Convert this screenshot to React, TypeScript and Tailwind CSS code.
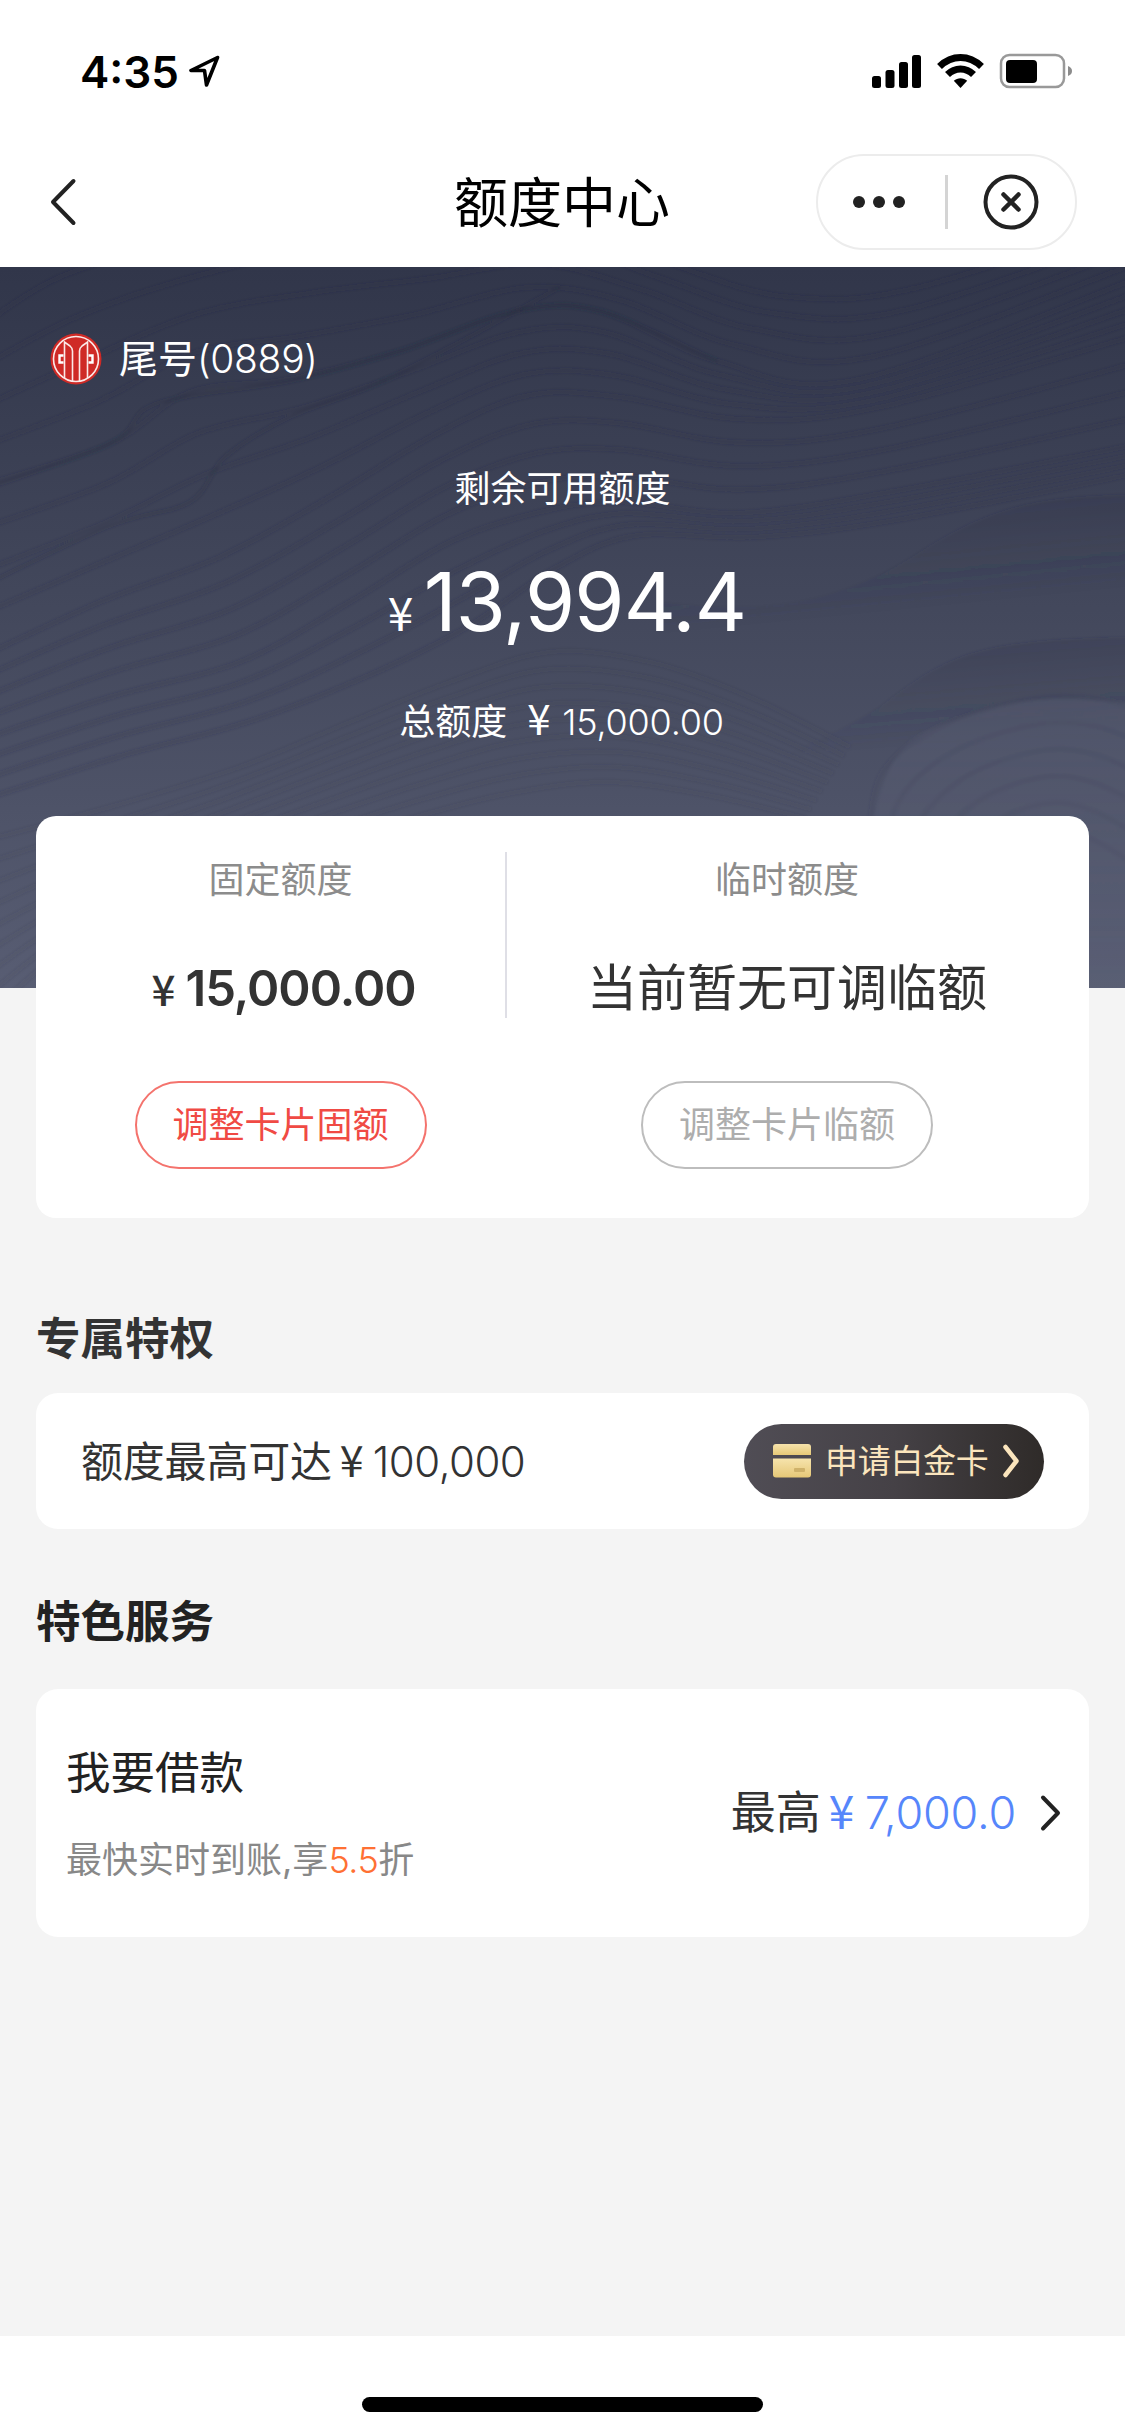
import type { ReactNode } from "react";

type Point = [number, number];

// contour lines of the hero background, from the top one to the bottom one
const contours: Point[][] = [
  [[-40, 75], [60, 10], [200, -30], [330, -60], [450, -60], [560, -50], [680, 0], [790, 30], [920, 20], [1165, -60]],
  [[-40, 225], [107, 178], [190, 125], [290, 112], [400, 84], [516, 44], [600, 44], [717, 94], [860, 112], [1165, 0]],
  [[-40, 400], [100, 335], [220, 290], [330, 230], [440, 165], [530, 128], [620, 130], [740, 152], [880, 140], [1165, 60]],
  [[-40, 480], [110, 430], [240, 395], [350, 335], [450, 275], [540, 245], [620, 235], [740, 246], [890, 225], [1165, 172]],
  [[-40, 560], [120, 510], [250, 475], [370, 435], [470, 390], [560, 320], [640, 280], [760, 278], [900, 262], [1165, 210]],
];

const lower: Point[][] = [
  [[-40, 580], [110, 540], [240, 500], [350, 455], [450, 415], [550, 385], [650, 395], [750, 430], [850, 480]],
  [[-40, 800], [60, 700], [180, 640], [300, 600], [400, 570], [500, 545], [600, 530], [700, 540], [800, 560]],
];

const hill: Point[][] = [
  [[868, 600], [880, 510], [940, 460], [1030, 432], [1100, 432], [1165, 455]],
  [[960, 790], [975, 690], [1000, 620], [1045, 590], [1090, 600], [1165, 650]],
];

// the few lines that stand out from the rest
const accents: Point[][] = [
  [[-40, 230], [107, 178], [145, 142], [190, 129], [290, 114], [400, 84], [516, 44], [600, 44], [717, 94]],
  [[-40, 330], [107, 260], [190, 235], [225, 190], [290, 150], [370, 120], [460, 75], [560, 20]],
];

function toPath(points: Point[]) {
  let d = `M${points[0][0]} ${points[0][1]}`;
  for (let i = 0; i < points.length - 1; i++) {
    const p0 = points[Math.max(i - 1, 0)];
    const p1 = points[i];
    const p2 = points[i + 1];
    const p3 = points[Math.min(i + 2, points.length - 1)];
    d += `C${p1[0] + (p2[0] - p0[0]) / 6} ${p1[1] + (p2[1] - p0[1]) / 6} ${p2[0] - (p3[0] - p1[0]) / 6} ${p2[1] - (p3[1] - p1[1]) / 6} ${p2[0]} ${p2[1]}`;
  }
  return d;
}

function blend(a: Point[], b: Point[], f: number): Point[] {
  return a.map(([x, y], i) => [x + (b[i][0] - x) * f, y + (b[i][1] - y) * f]);
}

function family(lines: Point[][], steps: number) {
  const paths: string[] = [];
  for (let i = 0; i < lines.length - 1; i++) {
    for (let s = 0; s < steps; s++) {
      paths.push(toPath(blend(lines[i], lines[i + 1], s / steps)));
    }
  }
  return paths;
}

function Waves() {
  return (
    <svg className="absolute inset-0 w-full h-full" viewBox="0 0 1125 721" fill="none">
      <defs>
        <linearGradient id="swoosh" x1="0.4" y1="0" x2="0.65" y2="1">
          <stop offset="0" stopColor="#2b2f42" stopOpacity="0.24" />
          <stop offset="0.6" stopColor="#2b2f42" stopOpacity="0" />
        </linearGradient>
        <linearGradient id="hill" x1="0" y1="0" x2="0" y2="1">
          <stop offset="0" stopColor="#686d83" stopOpacity="0.22" />
          <stop offset="1" stopColor="#686d83" stopOpacity="0.05" />
        </linearGradient>
        <filter id="soft" x="-5%" y="-5%" width="110%" height="110%">
          <feGaussianBlur stdDeviation="1.6" />
        </filter>
      </defs>
      <g filter="url(#soft)">
        {family(contours, 4).map((d, i) => (
          <path key={i} d={d} stroke="#23283b" strokeOpacity="0.16" strokeWidth="5" />
        ))}
        {family(lower, 9).map((d, i) => (
          <path key={i} d={d} stroke="#2b3044" strokeOpacity="0.09" strokeWidth="5" />
        ))}
        {accents.map((points, i) => (
          <path key={i} d={toPath(points)} stroke="#23283b" strokeOpacity="0.2" strokeWidth="4" />
        ))}
        <path
          d="M660 335C780 350 850 330 920 285C990 240 1040 228 1140 228V420H660Z"
          fill="url(#swoosh)"
        />
        <path
          d="M560 560C700 520 800 490 880 440C950 385 980 372 1140 370V560H560Z"
          fill="url(#swoosh)"
        />
        <path
          d="M868 600C876 500 900 470 950 455C1010 432 1050 426 1140 438V740H868Z"
          fill="url(#hill)"
        />
        {family(hill, 6).map((d, i) => (
          <path key={i} d={d} stroke="#353a50" strokeOpacity="0.11" strokeWidth="5" />
        ))}
      </g>
    </svg>
  );
}

function StatusBar() {
  return (
    <div className="flex justify-between items-center pt-[50px] pr-[53px] pl-[80px] h-[94px]">
      <div className="flex items-center">
        <span className="w-[109px] font-semibold text-[44px] text-black leading-[44px]">4:35</span>
        <svg className="mb-[2px] w-[31px] h-[32px]" viewBox="0 0 31 32" fill="none">
          <path
            d="M28.5 2.5L2 15.5H15.5L17.5 30L28.5 2.5Z"
            stroke="#000"
            strokeWidth="3.6"
            strokeLinejoin="round"
          />
        </svg>
      </div>
      <svg className="w-[201px] h-[38px]" viewBox="871 53 201 38">
        <rect x="872" y="76" width="9" height="12" rx="2.5" />
        <rect x="885.5" y="70" width="9" height="18" rx="2.5" />
        <rect x="899" y="62" width="9" height="26" rx="2.5" />
        <rect x="912" y="55" width="9" height="33" rx="2.5" />
        <g fill="none" stroke="#000" strokeWidth="7">
          <path d="M939.5 66.5C952 54.5 969 54.5 981.5 66.5" />
          <path d="M947.5 74.5C955 67 966 67 973.5 74.5" />
        </g>
        <path d="M960.5 88L953.8 80.8C957.5 77.3 963.5 77.3 967.2 80.8Z" />
        <rect x="1001" y="55" width="63" height="32" rx="8.5" fill="none" stroke="#999" strokeWidth="2.5" />
        <rect x="1006" y="60" width="31" height="23" rx="4" />
        <path d="M1068 66C1071 67 1072 69 1072 71C1072 73 1071 75 1068 76Z" fill="#8c8c8c" />
      </svg>
    </div>
  );
}

function NavBar() {
  return (
    <div className="items-center grid grid-cols-[1fr_auto_1fr] pt-[60px] pr-[48px] pb-[2px] pl-[49px] h-[155px]">
      <svg className="w-[29px] h-[50px]" viewBox="0 0 29 50" fill="none">
        <path d="M24.5 4L4 25L24.5 46" stroke="#222" strokeWidth="4" strokeLinecap="round" strokeLinejoin="round" />
      </svg>
      <h1 className="pr-[2px] pb-[4px] font-['Noto_Sans_CJK_SC'] text-[54px] text-black leading-[60px]">额度中心</h1>
      <div className="flex items-center justify-self-end border-2 border-[#ececec] rounded-full w-[261px] h-[96px]">
        <div className="flex justify-center gap-[8px] pr-[5px] w-[127px]">
          <span className="bg-[#222] rounded-full w-[12px] h-[12px]" />
          <span className="bg-[#222] rounded-full w-[12px] h-[12px]" />
          <span className="bg-[#222] rounded-full w-[12px] h-[12px]" />
        </div>
        <span className="bg-[#d4d4d4] w-[3px] h-[54px]" />
        <svg className="mr-auto ml-[35px] w-[56px] h-[56px]" viewBox="0 0 56 56" fill="none" stroke="#222" strokeLinecap="round">
          <circle cx="28" cy="28" r="25.5" strokeWidth="4" />
          <path d="M20.5 20.5L35.5 35.5M35.5 20.5L20.5 35.5" strokeWidth="4.5" />
        </svg>
      </div>
    </div>
  );
}

function BankLogo() {
  return (
    <svg className="w-[52px] h-[52px]" viewBox="0 0 52 52" fill="none">
      <circle cx="26" cy="26" r="25.5" fill="#cf2a26" />
      <g stroke="#fbe9e8" strokeWidth="1.6">
        <circle cx="26" cy="26" r="22.5" />
        <path d="M14.5 45V9L20 13Q22.500 15 22.500 18V48" />
        <path d="M37.5 45V9L32 13Q29.500 15 29.500 18V48" />
      </g>
      <path
        d="M13.500 22.5H9.500V29.500H13.500M38.500 22.500H42.500V29.500H38.500"
        stroke="#fff"
        strokeWidth="2.4"
      />
    </svg>
  );
}

function Yen({ className }: { className: string }) {
  return <span className={`font-['Noto_Sans_CJK_SC'] ${className}`}>¥</span>;
}

function Hero() {
  return (
    <div className="relative bg-linear-to-b from-[#31364a] via-[#44495d] to-[#585d73] h-[721px]">
      <Waves />
      <div className="relative flex flex-col items-center text-white">
        <div className="flex items-center self-start gap-[17px] mt-[66px] ml-[50px] h-[52px]">
          <BankLogo />
          <span className="text-[39px] leading-[52px]">
            尾号<span className="font-[350] tracking-[-0.3px]">(0889)</span>
          </span>
        </div>
        <p className="mt-[78px] h-[52px] text-[36px] leading-[52px]">剩余可用额度</p>
        <div className="flex items-baseline mt-[37px] ml-[9px] h-[100px] leading-[100px]">
          <Yen className="w-[36px] text-[46px]" />
          <span className="font-[370] text-[81px] tracking-[-0.9px]">13,994.4</span>
        </div>
        <div className="flex items-baseline mt-[39px] mr-[2px] h-[52px] text-[36px] leading-[52px]">
          <span className="mr-[20px]">总额度</span>
          <Yen className="w-[35px] text-[42px]" />
          <span className="font-[350] tracking-[-0.2px]">15,000.00</span>
        </div>
      </div>
    </div>
  );
}

type LimitProps = {
  label: string;
  action: string;
  disabled?: boolean;
  children: ReactNode;
};

function Limit({ label, action, disabled, children }: LimitProps) {
  return (
    <div className="flex flex-col items-center">
      <span className="text-[#8c8c8c] text-[36px] leading-[52px]">{label}</span>
      <div className="flex items-baseline mt-[47px] h-[70px] text-[#333] text-[50px] leading-[70px]">
        {children}
      </div>
      <button
        className={`mt-[58px] border-2 rounded-full w-[292px] h-[88px] text-[36px] leading-[85px] ${
          disabled ? "border-[#bdbdbd] text-[#adadad]" : "border-[#f4736d] text-[#f04a44]"
        }`}
      >
        {action}
      </button>
    </div>
  );
}

function LimitCard() {
  return (
    <div className="relative grid grid-cols-[449px_2px_1fr] bg-white mx-[36px] -mt-[172px] pr-[22px] pl-[20px] pt-[38px] rounded-[20px] h-[402px]">
      <Limit label="固定额度" action="调整卡片固额">
        <Yen className="ml-[6px] w-[34px] text-[42px] font-medium" />
        <span className="font-semibold text-[49px] tracking-[-1px]">15,000.00</span>
      </Limit>
      <span className="bg-[#dfdfe6] -mt-[2px] h-[166px]" />
      <Limit label="临时额度" action="调整卡片临额" disabled>
        当前暂无可调临额
      </Limit>
    </div>
  );
}

function PlatinumButton() {
  return (
    <button className="flex items-center bg-linear-to-r from-[#504d55] via-[#454146] to-[#2f2b29] pl-[29px] rounded-full w-[300px] h-[75px]">
      <svg className="w-[38px] h-[34px]" viewBox="0 0 38 34">
        <defs>
          <linearGradient id="gold" x1="0" y1="0" x2="0" y2="1">
            <stop offset="0" stopColor="#f6e3ac" />
            <stop offset="1" stopColor="#e6c877" />
          </linearGradient>
        </defs>
        <path d="M3 0H35Q38 0 38 3V11H0V3Q0 0 3 0Z" fill="url(#gold)" />
        <path d="M0 14.5H38V30.5Q38 33.5 35 33.5H3Q0 33.5 0 30.5Z" fill="url(#gold)" />
        <rect x="21" y="24" width="11" height="4" rx="1" fill="#cfb26a" />
      </svg>
      <span className="ml-[14px] w-[165px] text-[#fbe5bd] text-[33px] leading-[52px] text-left tracking-[-0.3px]">申请白金卡</span>
      <svg className="ml-[11px] w-[20px] h-[36px]" viewBox="0 0 20 36" fill="none">
        <path d="M4.5 4L15.5 18L4.5 32" stroke="#fbe5bd" strokeWidth="4.5" strokeLinecap="round" strokeLinejoin="round" />
      </svg>
    </button>
  );
}

function App() {
  return (
    <div className="flex flex-col bg-[#f4f4f4] w-[1125px] h-[2435px] overflow-hidden font-[Inter,'Noto_Sans_CJK_SC',sans-serif]">
      <div className="bg-white h-[267px]">
        <StatusBar />
        <NavBar />
      </div>
      <Hero />
      <LimitCard />

      <h2 className="mt-[91px] ml-[36px] h-[59px] font-semibold text-[#333] text-[44.500px] leading-[60px]">专属特权</h2>
      <div className="flex justify-between items-center bg-white mx-[36px] mt-[25px] pr-[45px] pl-[45px] rounded-[22px] h-[136px]">
        <div className="flex items-baseline pb-[2px] text-[#333] text-[42px] leading-[60px]">
          <span className="tracking-[-0.2px]">额度最高可达</span>
          <Yen className="ml-[8px] w-[33px] text-[43px]" />
          <span className="font-[350] tracking-[-0.5px]">100,000</span>
        </div>
        <PlatinumButton />
      </div>

      <h2 className="mt-[63px] ml-[36px] font-semibold text-[#222] text-[44.500px] leading-[60px]">特色服务</h2>
      <div className="flex justify-between items-center bg-white mx-[36px] mt-[37px] pr-[27px] pl-[30px] rounded-[22px] h-[248px]">
        <div className="flex flex-col pt-[3px]">
          <span className="text-[#222] text-[44.500px] leading-[60px]">我要借款</span>
          <span className="mt-[31px] text-[#888] text-[36px] leading-[52px]">
            最快实时到账,享<span className="text-[#ff7033] font-[350] tracking-[-0.5px]">5.5</span>折
          </span>
        </div>
        <div className="flex items-center text-[45px] leading-[60px]">
          <span className="text-[#333]">最高</span>
          <span className="flex items-baseline ml-[8px] pb-[4px] text-[#5686fb]">
            <Yen className="w-[36px] text-[46px]" />
            <span className="font-[350] tracking-[-0.2px]">7,000.0</span>
          </span>
          <svg className="ml-[22px] w-[24px] h-[40px]" viewBox="0 0 24 40" fill="none">
            <path d="M5 4.5L20 20L5 35.5" stroke="#222" strokeWidth="4" strokeLinecap="round" strokeLinejoin="round" />
          </svg>
        </div>
      </div>

      <div className="flex justify-center bg-white mt-auto pt-[61px] h-[99px]">
        <span className="bg-black rounded-full w-[401px] h-[15px]" />
      </div>
    </div>
  );
}

export default App;
